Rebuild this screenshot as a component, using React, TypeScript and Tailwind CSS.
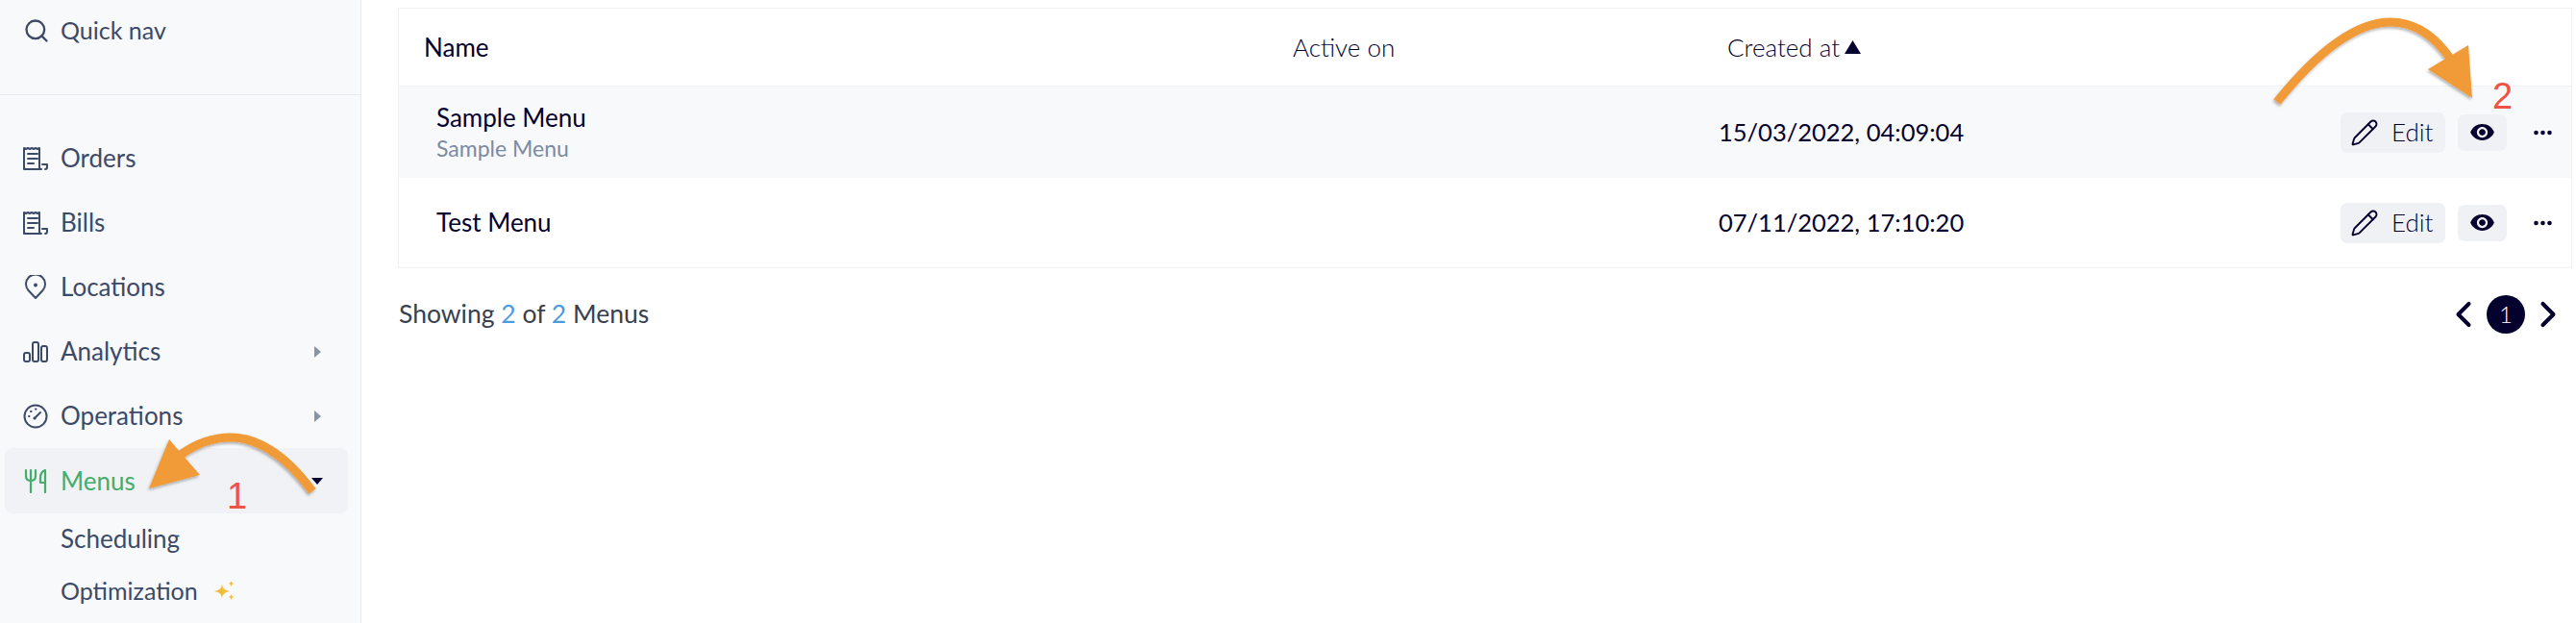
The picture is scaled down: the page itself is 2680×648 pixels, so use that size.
import React from "react";
import { Search, Pencil, ChevronLeft, ChevronRight } from "lucide-react";

const Receipt = () => (
  <svg width="26" height="26" viewBox="0 0 26 26" fill="none" stroke="currentColor" strokeWidth="2" strokeLinejoin="round" strokeLinecap="round">
    <path d="M1 24V2l2 1 2-1 2 1 2-1 2 1 2-1 2 1 2-1v20a2 2 0 0 0 2 2H3a2 2 0 0 1-2-2z" />
    <path d="M20 19h5v3a2 2 0 0 1-2 2" />
    <path d="M5 8h10M5 13h10M5 18h6" />
  </svg>
);
const Pin = () => (
  <svg width="26" height="26" viewBox="0 0 26 26" fill="none" stroke="currentColor" strokeWidth="2" strokeLinejoin="round">
    <path d="M13 24 5.500 16A10 10 0 1 1 20.500 16z" />
    <circle cx="13" cy="10.500" r="2" fill="currentColor" stroke="none" />
  </svg>
);
const Bars = () => (
  <svg width="26" height="24" viewBox="0 0 26 24" fill="none" stroke="currentColor" strokeWidth="2">
    <rect x="1" y="13" width="6" height="9" rx="2" />
    <rect x="10" y="2" width="6" height="20" rx="2" />
    <rect x="19" y="6" width="6" height="16" rx="2" />
  </svg>
);
const Gauge = () => (
  <svg width="26" height="26" viewBox="0 0 26 26" fill="none" stroke="currentColor" strokeWidth="2" strokeLinecap="round">
    <circle cx="13" cy="13" r="11.500" />
    <path d="M12 15l6-6" />
    <circle cx="12" cy="15" r="1.600" fill="currentColor" stroke="none" />
    <path d="M6 13h.5M8 8h.5M13 5.500h.5" />
  </svg>
);
const Utensils = () => (
  <svg width="24" height="26" viewBox="0 0 24 26" fill="none" stroke="currentColor" strokeWidth="2.200" strokeLinecap="round" strokeLinejoin="round">
    <path d="M2 2v6c0 3 2 5 5 5s5-2 5-5V2M7 2v23" />
    <path d="M22 25V2c-3 1-5 4-5 8v5h5" />
  </svg>
);
const Sparkles = () => (
  <svg width="22" height="22" viewBox="0 0 22 22" fill="#f2bd3a">
    <path d="M8 3.500c.6 4.500 2.500 6.500 8 7.500-5.500 1-7.400 3-8 7.500-.6-4.500-2.500-6.500-8-7.500 5.500-1 7.400-3 8-7.500z" />
    <path d="M17.500 0c.3 1.800 1 2.700 3.500 3-2.500.3-3.200 1.200-3.500 3.500-.3-2.300-1-3.200-3.500-3.500 2.500-.3 3.200-1.200 3.500-3z" />
    <path d="M17.500 14c.3 1.800 1 2.700 3.500 3-2.500.3-3.200 1.200-3.500 3.500-.3-2.300-1-3.200-3.500-3.500 2.500-.3 3.200-1.200 3.500-3z" />
  </svg>
);
const Eye = () => (
  <svg width="27" height="27" viewBox="0 0 24 24" fill="currentColor">
    <path d="M12 4.500C7 4.500 2.730 7.610 1 12c1.730 4.390 6 7.500 11 7.500s9.270-3.110 11-7.500c-1.730-4.390-6-7.500-11-7.500zM12 17c-2.760 0-5-2.240-5-5s2.240-5 5-5 5 2.240 5 5-2.240 5-5 5zm0-8c-1.660 0-3 1.340-3 3s1.340 3 3 3 3-1.340 3-3-1.340-3-3-3z" />
  </svg>
);
const Dots = () => (
  <svg width="19" height="6" viewBox="0 0 19 6" fill="currentColor">
    <circle cx="2.500" cy="3" r="2.300" />
    <circle cx="9.500" cy="3" r="2.300" />
    <circle cx="16.500" cy="3" r="2.300" />
  </svg>
);
const CaretRight = () => (
  <svg width="7" height="12" viewBox="0 0 7 12" fill="#8794a8"><path d="M0 0l7 6-7 6z" /></svg>
);
const CaretDown = () => (
  <svg width="12" height="7" viewBox="0 0 12 7" fill="#04012e"><path d="M0 0h12L6 7z" /></svg>
);

function NavItem({ icon, label, caret }: { icon: React.ReactNode; label: string; caret?: boolean }) {
  return (
    <div className="h-[67px] ml-[5px] mr-[13px] pl-[19px] pr-[28px] flex items-center">
      <span className="w-[26px] mr-[13px] flex justify-center">{icon}</span>
      <span className="flex-1">{label}</span>
      {caret && <CaretRight />}
    </div>
  );
}

function Actions() {
  return (
    <div className="flex items-center justify-end pr-[20px] text-[#04012e]">
      <button className="w-[109px] h-[42px] rounded-[7px] bg-[#f0f1f5] flex items-center pl-[10px] gap-[13px] font-light">
        <Pencil size={30} strokeWidth={1.500} />
        <span>Edit</span>
      </button>
      <button className="w-[51px] h-[38px] ml-[13px] rounded-[7px] bg-[#f0f1f5] flex items-center justify-center">
        <Eye />
      </button>
      <span className="ml-[28px] flex"><Dots /></span>
    </div>
  );
}

export default function App() {
  return (
    <div className="relative h-[648px] w-[2680px] overflow-hidden flex bg-white font-['Lato',sans-serif] text-[26px]">
      <aside className="w-[376px] shrink-0 bg-[#f8f9fb] border-r border-[#e8eaf2] text-[#3c4a68] flex flex-col">
        <div className="h-[99px] shrink-0 border-b border-[#e8eaf2] pb-[34px] pl-[24px] flex items-center">
          <Search size={28} strokeWidth={2} className="mr-[11px]" />
          <span className="text-[25px]">Quick nav</span>
        </div>
        <div className="pt-[32px] flex flex-col">
          <NavItem icon={<Receipt />} label="Orders" />
          <NavItem icon={<Receipt />} label="Bills" />
          <NavItem icon={<Pin />} label="Locations" />
          <NavItem icon={<Bars />} label="Analytics" caret />
          <NavItem icon={<Gauge />} label="Operations" caret />
          <div className="h-[68px] ml-[5px] mr-[13px] pl-[19px] pr-[26px] flex items-center rounded-[8px] bg-[#f1f2f6] text-[#45ad6a]">
            <span className="w-[26px] mr-[13px] flex justify-center"><Utensils /></span>
            <span className="flex-1">Menus</span>
            <CaretDown />
          </div>
          <div className="h-[53px] pl-[63px] flex items-center">Scheduling</div>
          <div className="h-[56px] pl-[63px] flex items-center gap-[17px] text-[25px]">
            <span>Optimization</span>
            <Sparkles />
          </div>
        </div>
      </aside>

      <main className="flex-1 pl-[38px] pr-[4px] pt-[8px] text-[#04012e]">
        <div className="border border-[#f0f1f4]">
          <div className="h-[81px] border-b border-[#f0f1f4] grid grid-cols-[904px_452px_1fr] items-center">
            <div className="pl-[26px]">Name</div>
            <div className="pl-[26px] font-light">Active on</div>
            <div className="pl-[26px] flex items-center font-light">
              Created at
              <svg width="17" height="14" viewBox="0 0 17 14" fill="#04012e" className="ml-[5px]"><path d="M8.500 0l8.500 14H0z" /></svg>
            </div>
          </div>
          <div className="h-[95px] bg-[#f8f9fb] grid grid-cols-[904px_452px_1fr_auto] items-center">
            <div className="pl-[39px]">
              <div className="leading-[32px] -mt-[1px] mb-[1px]">Sample Menu</div>
              <div className="text-[23px] leading-[30px] text-[#7c8aa3]">Sample Menu</div>
            </div>
            <div />
            <div className="pl-[17px] text-[25.500px]">15/03/2022, 04:09:04</div>
            <Actions />
          </div>
          <div className="h-[93px] grid grid-cols-[904px_452px_1fr_auto] items-center">
            <div className="pl-[39px]">Test Menu</div>
            <div />
            <div className="pl-[17px] text-[25.500px]">07/11/2022, 17:10:20</div>
            <Actions />
          </div>
        </div>
        <div className="h-[96px] flex items-center justify-between pr-[3px]">
          <div className="text-[#374151] pl-[1px] text-[26.500px]">
            Showing <span className="text-[#4a9ce0]">2</span> of <span className="text-[#4a9ce0]">2</span> Menus
          </div>
          <div className="flex items-center">
            <ChevronLeft size={44} strokeWidth={2.200} className="mr-[2px]" />
            <span className="w-[40px] h-[40px] rounded-full bg-[#04012e] text-white text-[24px] flex items-center justify-center font-light">1</span>
            <ChevronRight size={44} strokeWidth={2.200} className="ml-[2px]" />
          </div>
        </div>
      </main>

      {/* Annotation overlays */}
      <svg className="absolute left-0 top-0 pointer-events-none" width="2680" height="648" viewBox="0 0 2680 648" fill="none">
        <defs>
          <filter id="s" x="-20%" y="-20%" width="140%" height="140%">
            <feDropShadow dx="-1" dy="2" stdDeviation="1.500" floodColor="#000" floodOpacity="0.3" />
          </filter>
        </defs>
        <g filter="url(#s)">
          <path d="M325 511C295 470 265 455 240 455C220 455 203 462 188 473" stroke="#f09a38" strokeWidth="9" />
          <path d="M155 508L176 457L208 494z" fill="#f09a38" />
          <path d="M2369 106C2410 55 2450 23 2487 23C2515 23 2535 40 2550 62" stroke="#f09a38" strokeWidth="9" />
          <path d="M2572 102L2568 47L2526 72z" fill="#f09a38" />
        </g>
      </svg>
      <span className="absolute left-[236px] top-[494px] text-[38px] leading-[44px] text-[#ef5346] font-['Liberation_Sans',sans-serif]">1</span>
      <span className="absolute left-[2593px] top-[78px] text-[38px] leading-[44px] text-[#ef5346] font-['Liberation_Sans',sans-serif]">2</span>
    </div>
  );
}
